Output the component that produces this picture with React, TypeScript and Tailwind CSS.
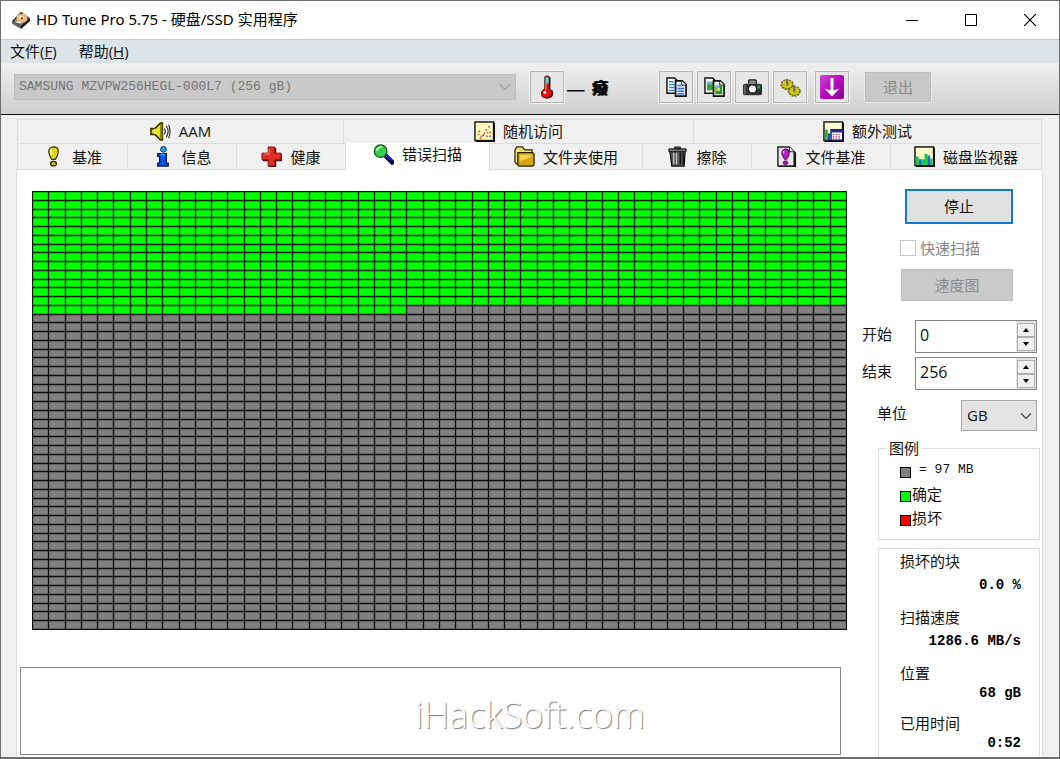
import { useState } from 'react';
import type { ReactNode } from 'react';

const COLUMNS = 50;
const ROWS = 50;
const SCANNED = 673;
const MAP_WIDTH = 814;
const MAP_HEIGHT = 438;

const columnX = (i: number) => Math.round((i * MAP_WIDTH) / COLUMNS);
const rowY = (i: number) => Math.round((i * MAP_HEIGHT) / ROWS);

function BlockMap() {
  const fullRows = Math.floor(SCANNED / COLUMNS);
  const rest = SCANNED % COLUMNS;
  const lines = [
    ...Array.from({ length: COLUMNS + 1 }, (_, i) => `M${columnX(i) + 0.5} 0V${MAP_HEIGHT + 1}`),
    ...Array.from({ length: ROWS + 1 }, (_, i) => `M0 ${rowY(i) + 0.5}H${MAP_WIDTH + 1}`),
  ].join('');
  return (
    <svg viewBox="0 0 815 439" className="block h-auto w-full" role="img" aria-label="错误扫描">
      <rect width="815" height="439" fill="#808080" />
      <rect width="815" height={rowY(fullRows)} fill="#00ff00" />
      <rect y={rowY(fullRows)} width={columnX(rest)} height={rowY(fullRows + 1) - rowY(fullRows)} fill="#00ff00" />
      <path d={lines} stroke="#000" strokeOpacity="0.9" strokeWidth="1.3" fill="none" />
    </svg>
  );
}

function Icon({ children, size = 'h-[21px] w-[21px]' }: { children: ReactNode; size?: string }) {
  return (
    <svg viewBox="0 0 22 22" className={`${size} shrink-0`} aria-hidden="true">
      {children}
    </svg>
  );
}

const DiskIcon = () => (
  <Icon size="h-5 w-5">
    <path d="M1 12 11 2l10 7-10 11z" fill="#3b3432" />
    <path d="M1 12v3l10 6v-3z" fill="#6d6764" />
    <path d="M21 9v3L11 21v-3z" fill="#171515" />
    <path d="M3 12 11 4l8 5-8 8z" fill="#8d7770" />
    <ellipse cx="12" cy="9" rx="6" ry="5" fill="#efb878" />
    <ellipse cx="11" cy="8" rx="3" ry="2" fill="#ffe4bd" />
    <circle cx="12" cy="9" r="1.2" fill="#7b4b2c" />
    <path d="M5 13l6 1" stroke="#eee" strokeWidth="1.5" />
  </Icon>
);

const ThermometerIcon = () => (
  <Icon size="h-6 w-6">
    <path d="M9 2q2-2 4 0v11q3 1 3 4 0 4-5 4t-5-4q0-3 3-4z" fill="#e3120b" stroke="#5c1512" />
    <path d="M9.5 2.5q1.500-1.500 3 0V8h-3z" fill="#43d7d7" />
    <path d="M13.500 2v11" stroke="#111" strokeWidth="1.300" />
    <path d="M10 8v6" stroke="#ff8b80" strokeWidth="1" />
    <circle cx="9" cy="16" r="1.300" fill="#fff" />
    <path d="M15 14q2 3 0 5-2 2-5 2" stroke="#460505" fill="none" strokeWidth="1.500" />
  </Icon>
);

const CopyTextIcon = () => (
  <Icon>
    <path d="M1 1h8l3 3v13H1z" fill="#fff" stroke="#111" strokeWidth="1.500" />
    <path d="M3 5h5M3 8h6M3 11h6M3 14h6" stroke="#2a83e8" strokeWidth="1.500" />
    <path d="M10 4h7l4 4v12H10z" fill="#e6eefb" stroke="#111" strokeWidth="1.800" />
    <path d="M16.500 4v4.500H21" fill="#fff" stroke="#111" />
    <path d="M12 9h4M12 12h7M12 15h7M12 17.500h7" stroke="#2a70d8" strokeWidth="1.600" />
  </Icon>
);

const CopyImageIcon = () => (
  <Icon>
    <path d="M1 1h8l3 3v13H1z" fill="#fff" stroke="#111" strokeWidth="1.500" />
    <path d="M3 5h7v9H3z" fill="#37a929" />
    <path d="M3 5h5v3H3z" fill="#72b6ef" />
    <path d="M10 4h7l4 4v12H10z" fill="#eee" stroke="#111" strokeWidth="1.800" />
    <path d="M16.500 4v4.500H21" fill="#fff" stroke="#111" />
    <path d="M12 9h7v9h-7z" fill="#259422" />
    <path d="M12 9h4v3h-4z" fill="#79b5d8" />
    <circle cx="15" cy="13" r="2" fill="#dae35a" />
  </Icon>
);

const CameraIcon = () => (
  <Icon>
    <path d="M7 7V4q0-1 1-1h6q1 0 1 1v3" fill="#888" stroke="#222" strokeWidth="1.500" />
    <rect x="1" y="7" width="20" height="12" rx="2" fill="#333" />
    <path d="M3 8v10" stroke="#777" strokeWidth="1.300" />
    <circle cx="11" cy="12.500" r="5" fill="#1b1b1b" />
    <circle cx="11" cy="12.500" r="3.600" fill="#fff" />
    <rect x="16" y="9" width="3" height="3" fill="#13ad22" />
  </Icon>
);

const GearsIcon = () => (
  <Icon>
    <ellipse cx="7.500" cy="8" rx="6" ry="4.800" fill="#bbb30c" stroke="#6f6b08" strokeWidth="2" strokeDasharray="2 1" />
    <ellipse cx="7.500" cy="7.500" rx="5" ry="4" fill="#d3ca1b" />
    <path d="M7.500 2v7" stroke="#686a68" strokeWidth="2.200" />
    <ellipse cx="15" cy="15" rx="5.800" ry="4.800" fill="#bbb30c" stroke="#6f6b08" strokeWidth="2" strokeDasharray="2 1" />
    <ellipse cx="15" cy="14.500" rx="5" ry="4" fill="#d3ca1b" />
    <path d="M15 9v7" stroke="#686a68" strokeWidth="2.200" />
  </Icon>
);

const DownloadIcon = () => (
  <svg viewBox="0 0 24 24" className="h-6 w-6" aria-hidden="true">
    <defs>
      <linearGradient id="purple" x1="0" y1="0" x2="1" y2="1">
        <stop offset="0" stopColor="#d045d4" />
        <stop offset="0.500" stopColor="#b70abc" />
        <stop offset="1" stopColor="#860090" />
      </linearGradient>
    </defs>
    <rect width="24" height="24" rx="2" fill="url(#purple)" />
    <path d="M12 3v16" stroke="#fff" strokeWidth="3" />
    <path d="M4.500 13.500 12 16l7.500-2.500-7.500 8z" fill="#fff" />
  </svg>
);

const SpeakerIcon = () => (
  <Icon>
    <path d="M1 8h4l6-6h2v18h-2l-6-6H1z" fill="#e8df1e" stroke="#2a2806" strokeWidth="1.600" />
    <path d="M12 3v16" stroke="#77720a" strokeWidth="2.500" />
    <path d="M5 8v6" stroke="#fffb9b" strokeWidth="1.500" />
    <path d="M15 8q2 3 0 6M17 5q4 6 0 12M19.500 4q3 7 0 14" fill="none" stroke="#333" strokeWidth="1.200" />
  </Icon>
);

const ScatterIcon = () => (
  <Icon>
    <rect x="2" y="2" width="20" height="20" fill="#111" />
    <rect x="1" y="1" width="19.500" height="19.500" fill="#fff6b8" stroke="#111" strokeWidth="1.500" />
    <path d="M4 14h1.500M7 16h1.500M10 13h1.500M13 16h1.500M16 12h1.500M6 18h1.500M13 12h1.500" stroke="#e8361c" strokeWidth="1.500" />
    <path d="M5 11h1.500M9 15h1.500M12 9h1.500M15 6h1.500M16 16h1.500" stroke="#3b45c9" strokeWidth="1.500" />
  </Icon>
);

const ExtraIcon = () => (
  <Icon>
    <rect x="2" y="2" width="20" height="20" fill="#111" />
    <rect x="1" y="1" width="19.500" height="19.500" fill="#fffbd0" stroke="#111" strokeWidth="1.500" />
    <path d="M2 9h3v11H2z" fill="#18bd3c" />
    <path d="M5 13h3v7H5z" fill="#244fc2" />
    <rect x="8.500" y="9" width="12" height="11" fill="#fff" stroke="#1a1765" strokeWidth="1.300" />
    <path d="M8 9h13v3H8z" fill="#292a91" />
    <path d="M10 14h9M10 16h9M10 18h9" stroke="#a54770" strokeDasharray="2 1" />
  </Icon>
);

const BenchmarkIcon = () => (
  <Icon>
    <path d="M11 1q5 0 5 4.500T13 14H9Q6 9 6 5.500T11 1z" fill="#ded61a" stroke="#393707" strokeWidth="1.300" />
    <path d="M9 3q-2 2 0 6" fill="none" stroke="#fffda7" strokeWidth="1.600" />
    <ellipse cx="11" cy="18.500" rx="3" ry="2.300" fill="#cfc515" stroke="#242203" strokeWidth="1.300" />
  </Icon>
);

const InfoIcon = () => (
  <Icon>
    <circle cx="12" cy="3.500" r="3" fill="#18a7ed" stroke="#07304d" />
    <path d="M6 8h9v10h2v3H6v-3h2v-7H6z" fill="#0756e8" stroke="#061543" strokeWidth="1.300" />
    <path d="M9 9h4" stroke="#22aef8" strokeWidth="2" />
  </Icon>
);

const HealthIcon = () => (
  <Icon>
    <path d="M8 2h8v6h6v8h-6v6H8v-6H2V8h6z" fill="#47100e" />
    <path d="M7.500 1h7v6.500h6.500v7h-6.500V21h-7v-6.500H1v-7h6.500z" fill="#e52b26" stroke="#781411" />
    <path d="M8.500 3v5.500H3" fill="none" stroke="#ff8b83" />
  </Icon>
);

const SearchIcon = () => (
  <Icon>
    <path d="m13 12 7 7" stroke="#070750" strokeWidth="5" strokeLinecap="square" />
    <path d="m13 11 6 6" stroke="#1c23c7" strokeWidth="2.500" />
    <circle cx="8" cy="7.500" r="6.600" fill="#35cf48" stroke="#12551b" strokeWidth="1.300" />
    <path d="M4 7q1-4 5-4" fill="none" stroke="#baffb9" strokeWidth="2" />
  </Icon>
);

const FolderIcon = () => (
  <Icon>
    <path d="M1 4l2-3h6l2 3h8v15H3L1 17z" fill="#f1e778" stroke="#2b2506" strokeWidth="1.300" />
    <path d="M4 7h15q2 0 2 2v10q0 2-2 2H6q-2 0-2-2z" fill="#d4a512" stroke="#282005" strokeWidth="1.300" />
    <path d="M6 9h12v3L6 16z" fill="#f0d04a" />
  </Icon>
);

const TrashIcon = () => (
  <Icon>
    <path d="M3 5h16l-1 16H5z" fill="#555" stroke="#111" strokeWidth="1.300" />
    <path d="M2 3h18v3H2zM8 1h6v2H8z" fill="#777" stroke="#111" />
    <path d="M7 7v12M10 7v12" stroke="#c7c7c7" strokeWidth="1.400" />
    <path d="M14 7v12M17 7v12" stroke="#111" strokeWidth="1.400" />
  </Icon>
);

const FileBenchmarkIcon = () => (
  <Icon>
    <path d="M3 2h13l5 5v15H3z" fill="#111" />
    <path d="M2 1h12l5 5v15H2z" fill="#e9e4ee" stroke="#222" strokeWidth="1.500" />
    <path d="M14 1v5h5" fill="#fff" stroke="#222" />
    <path d="M10 3q4 0 4 4t-3 7H9q-3-4-3-7t4-4z" fill="#b51bc1" stroke="#430d49" />
    <path d="M8 5v3" stroke="#f1a5f2" strokeWidth="1.500" />
    <ellipse cx="10" cy="17.500" rx="2.500" ry="1.800" fill="#a913b5" stroke="#430d49" />
  </Icon>
);

const MonitorIcon = () => (
  <Icon>
    <rect x="2" y="2" width="20" height="20" fill="#111" />
    <rect x="1" y="1" width="19.500" height="19.500" fill="#fffac9" stroke="#111" strokeWidth="1.500" />
    <path d="M2 11h3v9H2zM8 14h3v6H8zM11 8h3v12h-3zM17 13h2.500v7H17z" fill="#16ca48" />
    <path d="M5 14h3v6H5zM14 10h3v10h-3z" fill="#236cc8" />
  </Icon>
);

function Tab({ icon, label, className = '' }: { icon: ReactNode; label: string; className?: string }) {
  return (
    <button
      type="button"
      role="tab"
      className={`flex items-center justify-center gap-2 border-r border-[#dcdcdc] whitespace-nowrap ${className}`}
    >
      {icon}
      <span>{label}</span>
    </button>
  );
}

function ToolButton({ label, children, className = '' }: { label: string; children: ReactNode; className?: string }) {
  return (
    <button
      type="button"
      aria-label={label}
      className={`flex h-8 w-[34px] shrink-0 items-center justify-center border border-[#b5b5b5] bg-[#e6e6e6] shadow-[0_0_0_1px_#f3f3f3] ${className}`}
    >
      {children}
    </button>
  );
}

function Chevron({ className }: { className: string }) {
  return (
    <svg viewBox="0 0 12 8" className={`pointer-events-none absolute h-2 w-3 ${className}`} aria-hidden="true">
      <path d="M1 1.500 6 6.500l5-5" fill="none" stroke="currentColor" strokeWidth="1.200" />
    </svg>
  );
}

function SpinField({ id, label, initial }: { id: string; label: string; initial: number }) {
  const [value, setValue] = useState(initial);
  const spin = 'flex h-[14px] w-[18px] items-center justify-center border border-[#b0b0b0] bg-[#f0f0f0]';
  return (
    <div className="mr-[5px] ml-[15px] flex">
      <label htmlFor={id} className="w-[53px] shrink-0 pt-1 leading-5">
        {label}
      </label>
      <div className="flex h-[33px] min-w-0 flex-1 border border-[#858585] bg-white">
        <input
          id={id}
          value={value}
          onChange={(e) => setValue(Number(e.target.value) || 0)}
          className="w-full min-w-0 flex-1 px-1 pb-1 text-base outline-none"
        />
        <div className="flex flex-col justify-center bg-[#e3e3e3] px-px">
          <button type="button" aria-label={`${label} +`} className={spin} onClick={() => setValue(value + 1)}>
            <svg viewBox="0 0 6 4" className="h-1 w-[6px]"><path d="M0 4 3 0l3 4z" /></svg>
          </button>
          <button type="button" aria-label={`${label} -`} className={spin} onClick={() => setValue(Math.max(0, value - 1))}>
            <svg viewBox="0 0 6 4" className="h-1 w-[6px]"><path d="M0 0h6L3 4z" /></svg>
          </button>
        </div>
      </div>
    </div>
  );
}

const mono = "font-['Liberation_Mono','Noto_Sans_CJK_SC',monospace]";

function Swatch({ className }: { className: string }) {
  return <span className={`mt-1 h-[11px] w-[11px] border border-black ${className}`} />;
}

const stats = [
  { label: '损坏的块', value: '0.0 %', size: 'h-[56px] gap-1' },
  { label: '扫描速度', value: '1286.6 MB/s', size: 'h-[56px] gap-1' },
  { label: '位置', value: '68 gB', size: 'h-[50px]' },
  { label: '已用时间', value: '0:52', size: 'h-10' },
];

export default function App() {
  return (
    <div className="relative flex min-h-screen flex-col border border-b-2 border-[#6e6e6e] bg-[#f0f0f0] font-['Open_Sans','Noto_Sans_CJK_SC',sans-serif] text-[15px] text-[#111]">
      <header className="flex h-[38px] items-center bg-white pb-px pl-[10px]">
        <DiskIcon />
        <h1 className="ml-[5px] flex-1 font-['Noto_Sans','Noto_Sans_CJK_SC',sans-serif] whitespace-nowrap text-black">
          HD Tune Pro 5.75 - 硬盘/SSD 实用程序
        </h1>
        <button type="button" aria-label="最小化" className="flex h-full w-[59px] items-center justify-center">
          <svg viewBox="0 0 12 12" className="h-3 w-3"><path d="M0 6.500h12" stroke="#000" /></svg>
        </button>
        <button type="button" aria-label="最大化" className="flex h-full w-[59px] items-center justify-center">
          <svg viewBox="0 0 12 12" className="h-3 w-3"><path d="M.5.500h11v11H.5z" fill="none" stroke="#000" /></svg>
        </button>
        <button type="button" aria-label="关闭" className="flex h-full w-[59px] items-center justify-center">
          <svg viewBox="0 0 12 12" className="h-3 w-3"><path d="m0 0 12 12M12 0 0 12" stroke="#000" strokeWidth="1.200" /></svg>
        </button>
      </header>

      <nav className="flex h-6 items-center gap-[22px] border-t border-[#c6cace] bg-[#dce4ea] pl-[9px]">
        <button type="button">文件(<u>F</u>)</button>
        <button type="button">帮助(<u>H</u>)</button>
      </nav>

      <div className="flex h-[52px] items-center border-b border-[#111] bg-linear-to-b from-[#f0f0f0] to-[#cecece] pb-[3px] pl-[13px]">
        <div className="relative w-[502px] min-w-0">
          <select
            disabled
            aria-label="驱动器"
            className={`block h-[26px] w-full appearance-none border border-[#bcbcbc] bg-[#c9c9c9] pl-1 text-[13px] text-[#757575] opacity-100 ${mono}`}
          >
            <option>SAMSUNG MZVPW256HEGL-000L7 (256 gB)</option>
          </select>
          <Chevron className="top-[9px] right-[5px] text-[#9b9b9b]" />
        </div>
        <ToolButton label="温度" className="ml-[14px]"><ThermometerIcon /></ToolButton>
        <span className="ml-[2px] flex w-[93px] shrink-0 items-center gap-[6px] font-['Noto_Sans_CJK_SC',sans-serif] leading-6 text-[#111]">
          <span className="text-[22px]">—</span>
          <span className="text-base font-black text-black [text-shadow:1px_0_0_#000]">癈</span>
        </span>
        <div className="flex gap-1">
          <ToolButton label="复制文本"><CopyTextIcon /></ToolButton>
          <ToolButton label="复制图像"><CopyImageIcon /></ToolButton>
          <ToolButton label="截图"><CameraIcon /></ToolButton>
          <ToolButton label="选项"><GearsIcon /></ToolButton>
        </div>
        <ToolButton label="保存" className="ml-2"><DownloadIcon /></ToolButton>
        <button type="button" disabled className="ml-4 h-[30px] w-[66px] shrink-0 border border-[#bdbdbd] bg-[#c9c9c9] text-[#8a8a8a] shadow-[0_0_0_1px_#e8e8e8]">
          退出
        </button>
      </div>

      <main className="flex flex-1 flex-col pt-1 pr-4 pl-[15px]">
        <div role="tablist" className="ml-px mr-px border-l border-[#dcdcdc]">
          <div className="grid h-[25px] grid-cols-[326fr_350fr_348fr] border-y border-[#dcdcdc]">
            <Tab icon={<SpeakerIcon />} label="AAM" />
            <Tab icon={<ScatterIcon />} label="随机访问" />
            <Tab icon={<ExtraIcon />} label="额外测试" />
          </div>
          <div className="grid h-[25px] grid-cols-[110fr_109fr_109fr_144fr_153fr_109fr_139fr_151fr]">
            <Tab icon={<BenchmarkIcon />} label="基准" />
            <Tab icon={<InfoIcon />} label="信息" />
            <Tab icon={<HealthIcon />} label="健康" />
            <Tab icon={<SearchIcon />} label="错误扫描" className="z-10 -mt-px -mb-px bg-white pb-[5px]" />
            <Tab icon={<FolderIcon />} label="文件夹使用" />
            <Tab icon={<TrashIcon />} label="擦除" />
            <Tab icon={<FileBenchmarkIcon />} label="文件基准" />
            <Tab icon={<MonitorIcon />} label="磁盘监视器" />
          </div>
        </div>

        <div role="tabpanel" className="flex flex-1 border border-b-0 border-[#dcdcdc] bg-white">
          <section className="flex min-w-0 flex-1 flex-col pt-[21px]">
            <div className="pl-[15px]">
              <BlockMap />
            </div>
            <div className="mt-[37px] mr-[6px] mb-[2px] ml-[3px] min-h-20 flex-1 border border-[#858585]" />
          </section>

          <aside className="flex w-[195px] shrink-0 flex-col pt-[19px]">
            <button type="button" className="ml-[58px] h-[35px] w-[108px] border-2 border-[#1479d0] bg-[#e1e1e1]">
              停止
            </button>
            <label className="mt-3 ml-[53px] flex h-6 items-center gap-1 text-[#858585]">
              <input type="checkbox" disabled className="h-4 w-4 appearance-none border border-[#c4c4c4] bg-white" />
              快速扫描
            </label>
            <button type="button" disabled className="mt-[9px] ml-[54px] h-8 w-28 border border-[#bfbfbf] bg-[#cacaca] text-[#8a8a8a]">
              速度图
            </button>
            <div className="mt-[19px] flex flex-col gap-1">
              <SpinField id="start" label="开始" initial={0} />
              <SpinField id="end" label="结束" initial={256} />
            </div>
            <div className="mt-[10px] mr-[5px] ml-[30px] flex justify-between">
              <label htmlFor="unit" className="pt-[3px] leading-5">单位</label>
              <div className="relative">
                <select
                  id="unit"
                  className="block h-[31px] w-[76px] appearance-none border border-[#a9a9a9] bg-[#e3e3e3] pl-[5px] text-[15px] outline-none"
                >
                  <option>GB</option>
                  <option>MB</option>
                </select>
                <Chevron className="top-3 right-[5px] text-[#444]" />
              </div>
            </div>

            <fieldset className="mt-[7px] mr-[2px] ml-[31px] border border-[#dcdcdc] pb-[9px]">
              <legend className="ml-[7px] px-[3px] leading-5">图例</legend>
              <ul className="pl-[21px] leading-6">
                <li className={`flex items-center gap-2 text-[13px] ${mono}`}>
                  <Swatch className="bg-[#808080]" />= 97 MB
                </li>
                <li className="flex items-center gap-px">
                  <Swatch className="bg-[#00ff00]" />确定
                </li>
                <li className="flex items-center gap-px">
                  <Swatch className="bg-[#ff0000]" />损坏
                </li>
              </ul>
            </fieldset>

            <dl className="mt-2 mr-[2px] ml-[31px] flex-1 border border-b-0 border-[#dcdcdc] pt-[2px] pr-[18px] pl-[21px] leading-5">
              {stats.map((s) => (
                <div key={s.label} className={`flex flex-col ${s.size}`}>
                  <dt>{s.label}</dt>
                  <dd className={`text-right text-sm leading-5 font-bold whitespace-nowrap text-black ${mono}`}>{s.value}</dd>
                </div>
              ))}
            </dl>
          </aside>
        </div>
      </main>

      <p className="pointer-events-none absolute inset-x-0 bottom-[22px] text-center text-4xl leading-10 font-light text-white [text-shadow:1px_1px_1px_#777]">
        iHackSoft.com
      </p>
    </div>
  );
}
